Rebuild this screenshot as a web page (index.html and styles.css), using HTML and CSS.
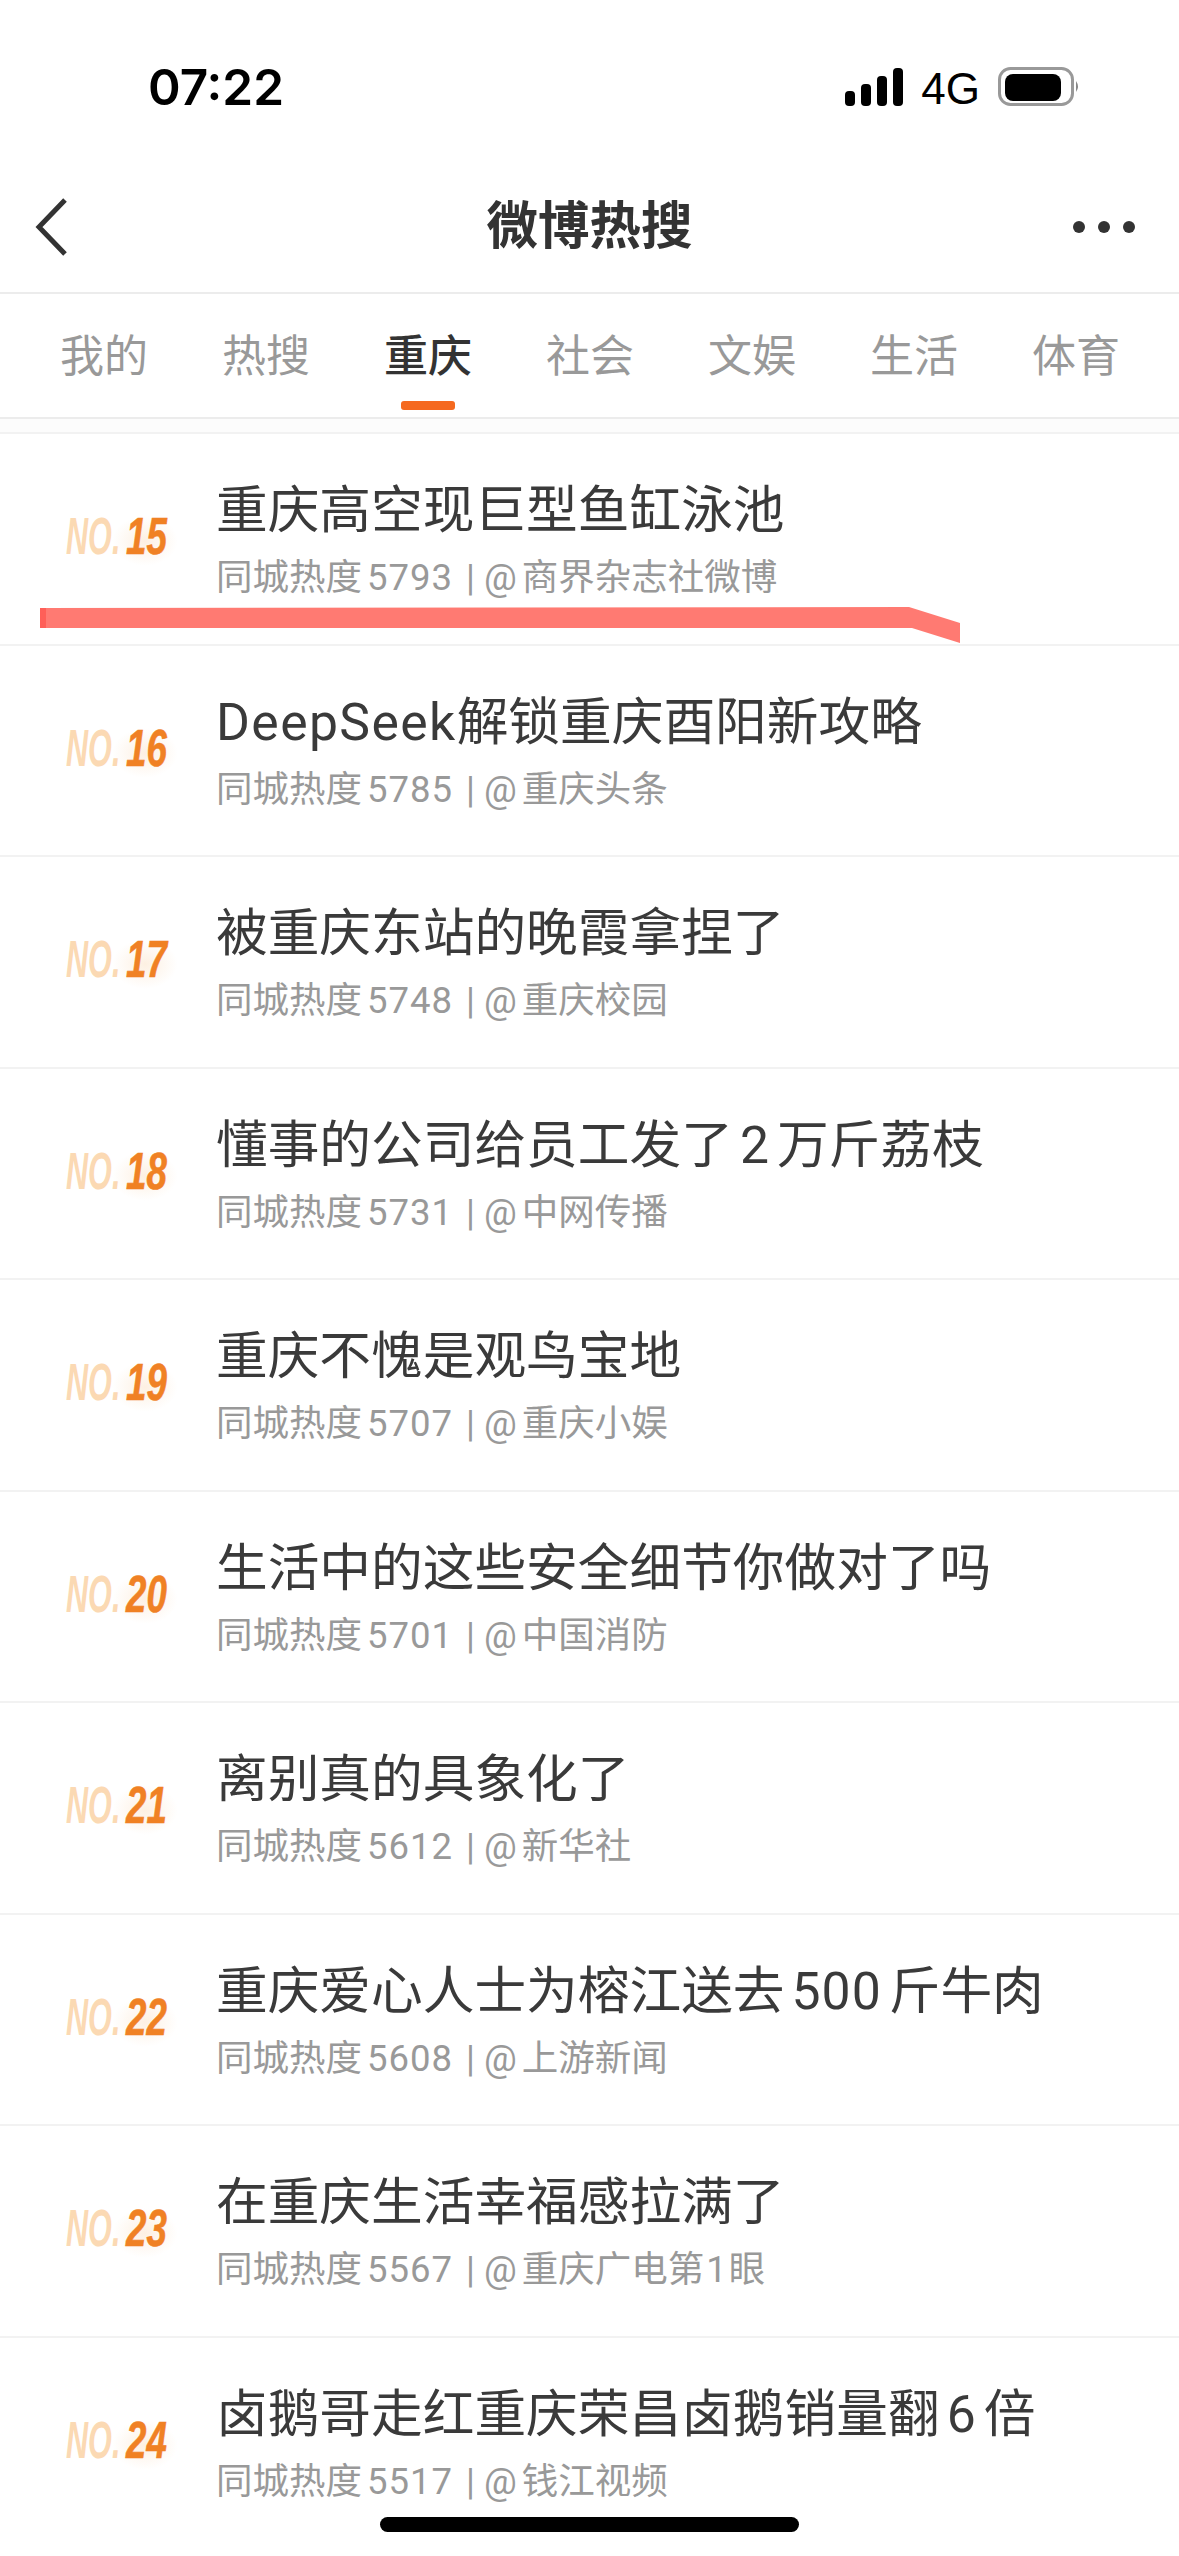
FILE: index.html
```html
<!DOCTYPE html>
<html lang="zh-CN">
<head>
<meta charset="utf-8">
<title>微博热搜</title>
<link rel="stylesheet" href="styles.css">
</head>
<body>
<div class="screen">
  <header class="status">
    <span class="time">07:22</span>
    <div class="status-right">
      <svg class="signal" width="58" height="38" viewBox="0 0 58 38"><rect x="0" y="23" width="10" height="15" rx="4"/><rect x="16" y="16" width="10" height="22" rx="4"/><rect x="32" y="8" width="10" height="30" rx="4"/><rect x="48" y="0" width="10" height="38" rx="4"/></svg>
      <span class="net">4G</span>
      <svg class="battery" width="83" height="40" viewBox="0 0 83 40"><rect x="1.500" y="1.500" width="73" height="36" rx="11" fill="none" stroke="#999" stroke-width="3"/><rect x="7" y="7" width="56" height="27" rx="8" fill="#000"/><path d="M78 14 Q82 19.500 78 25Z" fill="#888"/></svg>
    </div>
  </header>
  <nav class="nav">
    <svg class="back" width="36" height="60" viewBox="0 0 36 60"><path d="M31 3 L5 30 L31 57" fill="none" stroke="#333" stroke-width="5"/></svg>
    <h1 class="title">微博热搜</h1>
    <div class="more"><i></i><i></i><i></i></div>
  </nav>
  <div class="tabs">
    <div class="tab">我的</div>
    <div class="tab">热搜</div>
    <div class="tab active">重庆</div>
    <div class="tab">社会</div>
    <div class="tab">文娱</div>
    <div class="tab">生活</div>
    <div class="tab">体育</div>
  </div>
  <ul class="list">
    <li class="row"><div class="rank"><span class="no">NO.</span><span class="num">15</span></div><div class="body"><div class="head">重庆高空现巨型鱼缸泳池</div><div class="sub">同城热度<span class="hot">5793</span>|<span class="at">@</span>商界杂志社微博</div></div></li>
    <li class="row"><div class="rank"><span class="no">NO.</span><span class="num">16</span></div><div class="body"><div class="head"><span class="lat">DeepSeek</span>解锁重庆酉阳新攻略</div><div class="sub">同城热度<span class="hot">5785</span>|<span class="at">@</span>重庆头条</div></div></li>
    <li class="row"><div class="rank"><span class="no">NO.</span><span class="num">17</span></div><div class="body"><div class="head">被重庆东站的晚霞拿捏了</div><div class="sub">同城热度<span class="hot">5748</span>|<span class="at">@</span>重庆校园</div></div></li>
    <li class="row"><div class="rank"><span class="no">NO.</span><span class="num">18</span></div><div class="body"><div class="head">懂事的公司给员工发了<span class="d">2</span>万斤荔枝</div><div class="sub">同城热度<span class="hot">5731</span>|<span class="at">@</span>中网传播</div></div></li>
    <li class="row"><div class="rank"><span class="no">NO.</span><span class="num">19</span></div><div class="body"><div class="head">重庆不愧是观鸟宝地</div><div class="sub">同城热度<span class="hot">5707</span>|<span class="at">@</span>重庆小娱</div></div></li>
    <li class="row"><div class="rank"><span class="no">NO.</span><span class="num">20</span></div><div class="body"><div class="head">生活中的这些安全细节你做对了吗</div><div class="sub">同城热度<span class="hot">5701</span>|<span class="at">@</span>中国消防</div></div></li>
    <li class="row"><div class="rank"><span class="no">NO.</span><span class="num">21</span></div><div class="body"><div class="head">离别真的具象化了</div><div class="sub">同城热度<span class="hot">5612</span>|<span class="at">@</span>新华社</div></div></li>
    <li class="row"><div class="rank"><span class="no">NO.</span><span class="num">22</span></div><div class="body"><div class="head">重庆爱心人士为榕江送去<span class="d">500</span>斤牛肉</div><div class="sub">同城热度<span class="hot">5608</span>|<span class="at">@</span>上游新闻</div></div></li>
    <li class="row"><div class="rank"><span class="no">NO.</span><span class="num">23</span></div><div class="body"><div class="head">在重庆生活幸福感拉满了</div><div class="sub">同城热度<span class="hot">5567</span>|<span class="at">@</span>重庆广电第<span class="one">1</span>眼</div></div></li>
    <li class="row"><div class="rank"><span class="no">NO.</span><span class="num">24</span></div><div class="body"><div class="head">卤鹅哥走红重庆荣昌卤鹅销量翻<span class="d">6</span>倍</div><div class="sub">同城热度<span class="hot">5517</span>|<span class="at">@</span>钱江视频</div></div></li>
  </ul>
  <svg class="mark" width="1179" height="60" viewBox="0 0 1179 60"><path d="M40 8 L909 7 L960 23 L960 43 L912 28 L40 28Z" fill="#ff7a72"/><path d="M40 8 L46 8 L46 28 L40 28Z" fill="#ff5f58"/></svg>
  <div class="home"></div>
</div>
</body>
</html>
```
FILE: styles.css
```css
* { box-sizing: border-box; }
html, body { margin: 0; padding: 0; background: #fff; }
.screen {
  position: relative;
  width: 1179px;
  height: 2556px;
  overflow: hidden;
  background: #fff;
  font-family: Roboto, "Noto Sans CJK SC", sans-serif;
  color: #3a3a3a;
}
.status {
  height: 161px;
  display: flex;
  justify-content: space-between;
  padding: 56px 98px 0 148px;
}
.time {
  font-family: Inter, sans-serif;
  font-weight: 600;
  font-size: 49.500px;
  line-height: 62px;
  color: #000;
}
.status-right { display: flex; align-items: flex-start; padding-top: 12px; }
.net {
  font-family: "Liberation Sans", sans-serif;
  font-size: 44px;
  line-height: 41px;
  margin-left: 18px;
  color: #000;
}
.battery { margin-left: 18px; margin-top: -1px; }
.nav {
  height: 133px;
  border-bottom: 2px solid #ececec;
  display: grid;
  grid-template-columns: 1fr auto 1fr;
  align-items: center;
  padding: 0 44px;
}
.back { margin-left: -10px; }
.title {
  margin: 0;
  font-size: 51.500px;
  font-weight: 700;
  line-height: 70px;
  color: #333;
}
.more { display: flex; gap: 13px; justify-self: end; }
.more i { width: 12px; height: 12px; border-radius: 50%; background: #333; display: block; }
.tabs {
  height: 125px;
  border-bottom: 2px solid #ececec;
  display: flex;
  padding-left: 23px;
}
.tab {
  position: relative;
  width: 162px;
  text-align: center;
  font-size: 44px;
  line-height: 62px;
  padding-top: 32px;
  color: #999;
}
.tab.active { color: #333; font-weight: 500; }
.tab.active::after {
  content: "";
  position: absolute;
  left: 54px;
  top: 107px;
  width: 54px;
  height: 9px;
  border-radius: 3px;
  background: #f5691f;
}
.list {
  list-style: none;
  margin: 0;
  padding: 13px 0 0;
  background: linear-gradient(#fcfcfc 13px, #fff 13px);
}
.row {
  height: 211.500px;
  display: flex;
  border-top: 2px solid #f2f2f2;
  background: #fff;
}
.rank {
  width: 216px;
  flex: none;
  padding: 75px 0 0 66px;
  display: flex;
  align-items: flex-start;
  font-family: "Liberation Sans", sans-serif;
  font-weight: 700;
  font-style: italic;
  font-size: 51px;
  line-height: 56px;
  position: relative;
  white-space: nowrap;
}
.rank::after {
  content: "";
  position: absolute;
  left: 112px;
  top: 82px;
  width: 66px;
  height: 50px;
  background: radial-gradient(ellipse at center, #fdf0e2 0%, rgba(253, 240, 226, 0) 70%);
}
.no, .num {
  display: block;
  position: relative;
  z-index: 1;
  transform-origin: left top;
}
.no { color: #fbd9b3; width: 91px; margin-right: -31px; transform: scaleX(.6); }
.num { color: #f08124; width: 57px; transform: scaleX(.72); -webkit-text-stroke: .6px #f08124; }
.head {
  font-size: 51.700px;
  line-height: 70px;
  margin-top: 42px;
  color: #3a3a3a;
  white-space: nowrap;
}
.d { margin: 0 7px; letter-spacing: 1px; }
.lat { letter-spacing: 1.400px; }
.sub {
  font-size: 36.500px;
  line-height: 50px;
  margin-top: 7px;
  color: #999;
  white-space: nowrap;
}
.hot { margin: 0 13px 0 5px; letter-spacing: 1px; }
.at { margin: 0 5px 0 9px; }
.one { margin: 0 2px; }
.mark {
  position: absolute;
  left: 0;
  top: 600px;
}
.home {
  position: absolute;
  left: 380px;
  top: 2517px;
  width: 419px;
  height: 15px;
  border-radius: 8px;
  background: #000;
}
```
